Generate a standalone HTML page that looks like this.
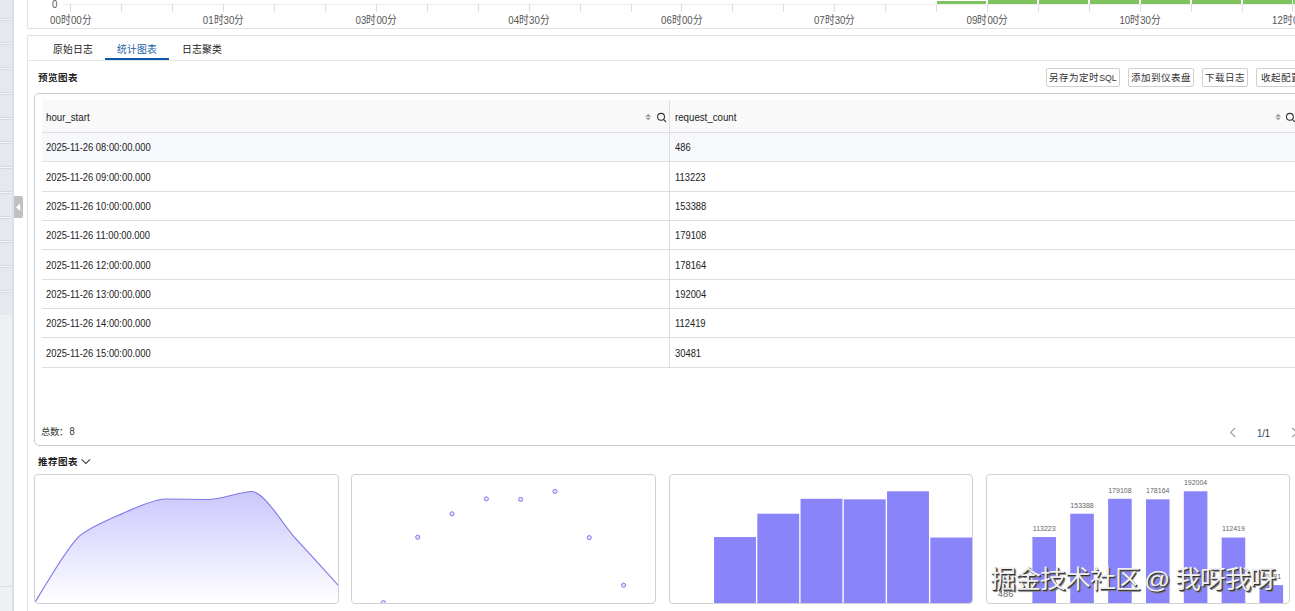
<!DOCTYPE html><html lang="zh-CN"><head><meta charset="utf-8"><style>
*{box-sizing:border-box;margin:0;padding:0}
html,body{width:1295px;height:611px;overflow:hidden;background:#fff;font-family:"Liberation Sans",sans-serif;color:#333}
body{position:relative}
.a{position:absolute}
.sbl{left:0;width:12px;height:3px;border-top:1px solid #d5d9e0;border-bottom:1px solid #d5d9e0;background:#f3f5f8}
.tick{width:1px;height:7.5px;top:4px;background:#dddddd}
.tl{top:13.8px;font-size:9.7px;line-height:12px;color:#555;white-space:nowrap;transform:scaleY(1.18)}
.tab{top:44px;font-size:9.8px;line-height:12px;white-space:nowrap;color:#222}
.btn{top:68px;height:19px;border:1px solid #cfcfcf;border-radius:2px;font-size:9.5px;line-height:17px;padding-top:0;text-align:center;white-space:nowrap;color:#333;background:#fff;overflow:hidden}
.rl{left:42px;width:1253px;height:1px;background:#dcdee1}
.cell{font-size:9.4px;line-height:12px;white-space:nowrap;color:#222;transform:scaleY(1.16);transform-origin:0 50%}
.card{top:474px;height:130px;border:1px solid #cfd1d4;border-radius:4px;overflow:hidden}
</style></head><body>
<div class="a" style="left:0;top:0;width:12px;height:611px;background:#e4e8ef"></div>
<div class="a" style="left:12px;top:0;width:2px;height:611px;background:#dcdfe4"></div>
<div class="a" style="left:0;top:315px;width:12px;height:296px;background:#eef0f3"></div>
<div class="a" style="left:0;top:586px;width:12px;height:1px;background:#dcdfe4"></div>
<div class="a sbl" style="top:18px"></div>
<div class="a sbl" style="top:42px"></div>
<div class="a sbl" style="top:67px"></div>
<div class="a sbl" style="top:92px"></div>
<div class="a sbl" style="top:117px"></div>
<div class="a sbl" style="top:141px"></div>
<div class="a sbl" style="top:166px"></div>
<div class="a sbl" style="top:191px"></div>
<div class="a sbl" style="top:216px"></div>
<div class="a sbl" style="top:240px"></div>
<div class="a sbl" style="top:265px"></div>
<div class="a sbl" style="top:290px"></div>
<div class="a" style="left:14px;top:196px;width:8.5px;height:22px;background:#bfc0c2;border-radius:0 2px 2px 0"></div>
<svg class="a" style="left:14px;top:196px" width="8" height="22"><path d="M2 11.3 L6.2 7.5 L6.2 15.1 Z" fill="#fff"/></svg>
<div class="a" style="left:27px;top:-1px;width:1270px;height:30px;border-left:1px solid #e2e2e2;border-bottom:1px solid #e2e2e2;border-bottom-left-radius:2px"></div>
<div class="a" style="left:63px;top:4px;width:1232px;height:1px;background:#efefef"></div>
<div class="a tick" style="left:70.4px"></div>
<div class="a tick" style="left:121.3px"></div>
<div class="a tick" style="left:172.2px"></div>
<div class="a tick" style="left:223.1px"></div>
<div class="a tick" style="left:274.1px"></div>
<div class="a tick" style="left:325.0px"></div>
<div class="a tick" style="left:375.9px"></div>
<div class="a tick" style="left:426.8px"></div>
<div class="a tick" style="left:477.7px"></div>
<div class="a tick" style="left:528.7px"></div>
<div class="a tick" style="left:579.6px"></div>
<div class="a tick" style="left:630.5px"></div>
<div class="a tick" style="left:681.4px"></div>
<div class="a tick" style="left:732.3px"></div>
<div class="a tick" style="left:783.2px"></div>
<div class="a tick" style="left:834.2px"></div>
<div class="a tick" style="left:885.1px"></div>
<div class="a tick" style="left:936.0px"></div>
<div class="a tick" style="left:986.9px"></div>
<div class="a tick" style="left:1037.8px"></div>
<div class="a tick" style="left:1088.8px"></div>
<div class="a tick" style="left:1139.7px"></div>
<div class="a tick" style="left:1190.6px"></div>
<div class="a tick" style="left:1241.5px"></div>
<div class="a tick" style="left:1292.4px"></div>
<div class="a tl" style="left:70.9px;width:60px;margin-left:-30px;text-align:center">00时00分</div>
<div class="a tl" style="left:223.6px;width:60px;margin-left:-30px;text-align:center">01时30分</div>
<div class="a tl" style="left:376.4px;width:60px;margin-left:-30px;text-align:center">03时00分</div>
<div class="a tl" style="left:529.1px;width:60px;margin-left:-30px;text-align:center">04时30分</div>
<div class="a tl" style="left:681.9px;width:60px;margin-left:-30px;text-align:center">06时00分</div>
<div class="a tl" style="left:834.7px;width:60px;margin-left:-30px;text-align:center">07时30分</div>
<div class="a tl" style="left:987.4px;width:60px;margin-left:-30px;text-align:center">09时00分</div>
<div class="a tl" style="left:1140.2px;width:60px;margin-left:-30px;text-align:center">10时30分</div>
<div class="a tl" style="left:1292.9px;width:60px;margin-left:-30px;text-align:center">12时00分</div>
<div class="a" style="left:52px;top:-2.5px;font-size:9.7px;line-height:12px;color:#555;transform:scaleY(1.18)">0</div>
<div class="a" style="left:937.0px;top:1.0px;width:49.4px;height:2.5px;background:#7ec35e"></div>
<div class="a" style="left:987.9px;top:0.0px;width:49.4px;height:4.0px;background:#7ec35e"></div>
<div class="a" style="left:1038.8px;top:0.0px;width:49.4px;height:4.0px;background:#7ec35e"></div>
<div class="a" style="left:1089.8px;top:0.0px;width:49.4px;height:4.0px;background:#7ec35e"></div>
<div class="a" style="left:1140.7px;top:0.0px;width:49.4px;height:4.0px;background:#7ec35e"></div>
<div class="a" style="left:1191.6px;top:0.0px;width:49.4px;height:4.0px;background:#7ec35e"></div>
<div class="a" style="left:1242.5px;top:0.0px;width:49.4px;height:4.0px;background:#7ec35e"></div>
<div class="a" style="left:1293.4px;top:0.0px;width:49.4px;height:4.0px;background:#7ec35e"></div>
<div class="a" style="left:27px;top:35px;width:1270px;height:580px;border-left:1px solid #e2e2e2;border-top:1px solid #e2e2e2;border-top-left-radius:2px"></div>
<div class="a" style="left:28px;top:60px;width:1267px;height:1px;background:#e6e6e6"></div>
<div class="a tab" style="left:53px">原始日志</div>
<div class="a tab" style="left:117px;color:#1d5ea8">统计图表</div>
<div class="a tab" style="left:182px">日志聚类</div>
<div class="a" style="left:105px;top:58px;width:64px;height:2px;background:#0b56a8"></div>
<div class="a" style="left:38px;top:72px;font-size:9.5px;line-height:12px;font-weight:400;color:#1a1a1a;text-shadow:0.4px 0 0 #1a1a1a;white-space:nowrap">预览图表</div>
<div class="a btn" style="left:1046px;width:74px">另存为定时<span style="font-size:8.7px">SQL</span></div>
<div class="a btn" style="left:1128px;width:66px">添加到仪表盘</div>
<div class="a btn" style="left:1202px;width:46px">下载日志</div>
<div class="a btn" style="left:1256px;width:60px;text-align:left;padding-left:4px">收起配置</div>
<div class="a" style="left:34px;top:93px;width:1290px;height:353px;border:1px solid #cbcccf;border-radius:5px"></div>
<div class="a" style="left:42px;top:100px;width:1253px;height:33px;background:#f9f9f9"></div>
<div class="a" style="left:42px;top:133px;width:1253px;height:28px;background:#f6f8fb"></div>
<div class="a rl" style="top:132px"></div>
<div class="a rl" style="top:161px"></div>
<div class="a rl" style="top:191px"></div>
<div class="a rl" style="top:220px"></div>
<div class="a rl" style="top:249px"></div>
<div class="a rl" style="top:279px"></div>
<div class="a rl" style="top:308px"></div>
<div class="a rl" style="top:337px"></div>
<div class="a rl" style="top:367px"></div>
<div class="a" style="left:669px;top:100px;width:1px;height:267px;background:#dcdee1"></div>
<svg class="a" style="left:0;top:0" width="1295" height="140"><path d="M648.20 113.7 L645.30 116.8 L651.10 116.8 Z M645.60 117.7 L650.80 117.7 L648.20 120.3 Z" fill="#9c9c9c"/><circle cx="661.05" cy="116.8" r="3.45" fill="none" stroke="#333" stroke-width="1.05"/><path d="M663.55 119.3 L665.65 121.6" stroke="#333" stroke-width="1.1" stroke-linecap="round"/></svg>
<svg class="a" style="left:0;top:0" width="1295" height="140"><path d="M1278.20 113.7 L1275.30 116.8 L1281.10 116.8 Z M1275.60 117.7 L1280.80 117.7 L1278.20 120.3 Z" fill="#9c9c9c"/><circle cx="1289.90" cy="116.8" r="3.45" fill="none" stroke="#333" stroke-width="1.05"/><path d="M1292.40 119.3 L1294.50 121.6" stroke="#333" stroke-width="1.1" stroke-linecap="round"/></svg>
<div class="a cell" style="left:46px;top:111.5px;font-size:9.7px">hour_start</div>
<div class="a cell" style="left:675px;top:111.5px;font-size:9.7px">request_count</div>
<div class="a cell" style="left:46px;top:142.4px">2025-11-26 08:00:00.000</div>
<div class="a cell" style="left:675px;top:142.4px">486</div>
<div class="a cell" style="left:46px;top:171.7px">2025-11-26 09:00:00.000</div>
<div class="a cell" style="left:675px;top:171.7px">113223</div>
<div class="a cell" style="left:46px;top:201.1px">2025-11-26 10:00:00.000</div>
<div class="a cell" style="left:675px;top:201.1px">153388</div>
<div class="a cell" style="left:46px;top:230.4px">2025-11-26 11:00:00.000</div>
<div class="a cell" style="left:675px;top:230.4px">179108</div>
<div class="a cell" style="left:46px;top:259.7px">2025-11-26 12:00:00.000</div>
<div class="a cell" style="left:675px;top:259.7px">178164</div>
<div class="a cell" style="left:46px;top:289.0px">2025-11-26 13:00:00.000</div>
<div class="a cell" style="left:675px;top:289.0px">192004</div>
<div class="a cell" style="left:46px;top:318.4px">2025-11-26 14:00:00.000</div>
<div class="a cell" style="left:675px;top:318.4px">112419</div>
<div class="a cell" style="left:46px;top:347.7px">2025-11-26 15:00:00.000</div>
<div class="a cell" style="left:675px;top:347.7px">30481</div>
<div class="a" style="left:41px;top:425.8px;font-size:9.4px;line-height:12px;white-space:nowrap;color:#333">总数：<span style="display:inline-block;margin-left:1.5px;transform:scaleY(1.15)">8</span></div>
<div class="a" style="left:1257px;top:428px;font-size:9.4px;line-height:12px;white-space:nowrap;color:#333;transform:scaleY(1.1)"><span style="color:#1d4f8f">1</span>/1</div>
<svg class="a" style="left:1224px;top:424px" width="71" height="18"><path d="M11.3 3.8 L6.6 8.4 L11.3 13.1" fill="none" stroke="#999" stroke-width="1.1"/><path d="M68.1 3.8 L72.8 8.4 L68.1 13.1" fill="none" stroke="#999" stroke-width="1.1"/></svg>
<div class="a" style="left:38px;top:456px;font-size:9.5px;line-height:12px;font-weight:400;color:#1a1a1a;text-shadow:0.4px 0 0 #1a1a1a;white-space:nowrap">推荐图表</div>
<svg class="a" style="left:79.5px;top:456px" width="12" height="10"><path d="M1.5 3.3 L5.8 7.5 L10.1 3.3" fill="none" stroke="#444" stroke-width="1.1"/></svg>
<div class="a card" style="left:34px;width:305px"></div>
<div class="a card" style="left:351px;width:305px"></div>
<div class="a card" style="left:669px;width:304px"></div>
<div class="a card" style="left:986px;width:304px"></div>
<svg class="a" style="left:0;top:0" width="1295" height="611"><defs><linearGradient id="g1" x1="0" y1="0" x2="0" y2="1"><stop offset="0" stop-color="#cac7fb"/><stop offset="1" stop-color="#ffffff"/></linearGradient><clipPath id="c1"><rect x="35" y="475" width="303" height="128" rx="3"/></clipPath></defs><g clip-path="url(#c1)"><path d="M35.00 602.52 C35.00 602.52 64.99 550.79 78.30 537.17 C86.64 528.63 110.39 518.83 121.60 513.88 C132.04 509.28 153.77 498.98 164.90 498.98 C175.42 498.98 197.47 499.52 208.20 499.52 C219.12 499.52 242.62 491.50 251.50 491.50 C264.27 491.50 284.06 526.02 294.80 537.63 C305.71 549.43 338.10 585.13 338.10 585.13 L338.10 603 L35.00 603 Z" fill="url(#g1)"/><path d="M35.00 602.52 C35.00 602.52 64.99 550.79 78.30 537.17 C86.64 528.63 110.39 518.83 121.60 513.88 C132.04 509.28 153.77 498.98 164.90 498.98 C175.42 498.98 197.47 499.52 208.20 499.52 C219.12 499.52 242.62 491.50 251.50 491.50 C264.27 491.50 284.06 526.02 294.80 537.63 C305.71 549.43 338.10 585.13 338.10 585.13" fill="none" stroke="#8078e6" stroke-width="1.15"/></g>
<g clip-path="url(#c2)">
<circle cx="383.40" cy="602.62" r="2.1" fill="#dedbfb" stroke="#8780ec" stroke-width="1.0"/>
<circle cx="417.71" cy="537.15" r="2.1" fill="#dedbfb" stroke="#8780ec" stroke-width="1.0"/>
<circle cx="452.02" cy="513.82" r="2.1" fill="#dedbfb" stroke="#8780ec" stroke-width="1.0"/>
<circle cx="486.33" cy="498.89" r="2.1" fill="#dedbfb" stroke="#8780ec" stroke-width="1.0"/>
<circle cx="520.64" cy="499.44" r="2.1" fill="#dedbfb" stroke="#8780ec" stroke-width="1.0"/>
<circle cx="554.95" cy="491.40" r="2.1" fill="#dedbfb" stroke="#8780ec" stroke-width="1.0"/>
<circle cx="589.26" cy="537.62" r="2.1" fill="#dedbfb" stroke="#8780ec" stroke-width="1.0"/>
<circle cx="623.57" cy="585.20" r="2.1" fill="#dedbfb" stroke="#8780ec" stroke-width="1.0"/>
</g><defs><clipPath id="c2"><rect x="352" y="475" width="303" height="128" rx="3"/></clipPath><clipPath id="c3"><rect x="670" y="475" width="302" height="128" rx="3"/></clipPath><clipPath id="c4"><rect x="987" y="475" width="302" height="128" rx="3"/></clipPath></defs>
<g clip-path="url(#c3)">
<rect x="714.05" y="537.05" width="41.9" height="65.95" fill="#8a84fb"/>
<rect x="757.30" y="513.72" width="41.9" height="89.28" fill="#8a84fb"/>
<rect x="800.55" y="498.79" width="41.9" height="104.21" fill="#8a84fb"/>
<rect x="843.80" y="499.34" width="41.9" height="103.66" fill="#8a84fb"/>
<rect x="887.05" y="491.30" width="41.9" height="111.70" fill="#8a84fb"/>
<rect x="930.30" y="537.52" width="41.9" height="65.48" fill="#8a84fb"/>
<rect x="973.55" y="585.10" width="41.9" height="17.90" fill="#8a84fb"/>
</g>
<g clip-path="url(#c4)">
<text x="1005.65" y="596.7" font-size="9.4" fill="#6a6a6a" text-anchor="middle" font-family="Liberation Sans, sans-serif">486</text>
<rect x="1032.40" y="537.05" width="23.6" height="65.95" fill="#8a84fb"/>
<text x="1044.20" y="530.85" font-size="7" fill="#666" text-anchor="middle" font-family="Liberation Sans, sans-serif">113223</text>
<rect x="1070.25" y="513.72" width="23.6" height="89.28" fill="#8a84fb"/>
<text x="1082.05" y="507.52" font-size="7" fill="#666" text-anchor="middle" font-family="Liberation Sans, sans-serif">153388</text>
<rect x="1108.10" y="498.79" width="23.6" height="104.21" fill="#8a84fb"/>
<text x="1119.90" y="492.59" font-size="7" fill="#666" text-anchor="middle" font-family="Liberation Sans, sans-serif">179108</text>
<rect x="1145.95" y="499.34" width="23.6" height="103.66" fill="#8a84fb"/>
<text x="1157.75" y="493.14" font-size="7" fill="#666" text-anchor="middle" font-family="Liberation Sans, sans-serif">178164</text>
<rect x="1183.80" y="491.30" width="23.6" height="111.70" fill="#8a84fb"/>
<text x="1195.60" y="485.10" font-size="7" fill="#666" text-anchor="middle" font-family="Liberation Sans, sans-serif">192004</text>
<rect x="1221.65" y="537.52" width="23.6" height="65.48" fill="#8a84fb"/>
<text x="1233.45" y="531.32" font-size="7" fill="#666" text-anchor="middle" font-family="Liberation Sans, sans-serif">112419</text>
<rect x="1259.50" y="585.10" width="23.6" height="17.90" fill="#8a84fb"/>
<text x="1271.30" y="578.90" font-size="7" fill="#666" text-anchor="middle" font-family="Liberation Sans, sans-serif">30481</text>
</g></svg>
<div class="a" style="left:989.5px;letter-spacing:-0.5px;font-size:24.5px;line-height:30px;font-weight:300;color:#efefef;white-space:nowrap;text-shadow:1px 1px 0 #333,1.6px 1.6px 0.8px #777;top:565px;transform:scaleX(1.06);transform-origin:0 0">掘金技术社区</div>
<div class="a" style="left:1144px;font-size:24.5px;line-height:30px;font-weight:300;color:#efefef;white-space:nowrap;text-shadow:1px 1px 0 #333,1.6px 1.6px 0.8px #777;top:565px;transform:scaleX(1.06);transform-origin:0 0">@</div>
<div class="a" style="left:1175px;letter-spacing:-0.3px;font-size:24.5px;line-height:30px;font-weight:300;color:#efefef;white-space:nowrap;text-shadow:1px 1px 0 #333,1.6px 1.6px 0.8px #777;top:565px;transform:scaleX(1.06);transform-origin:0 0">我呀我呀</div>
</body></html>
